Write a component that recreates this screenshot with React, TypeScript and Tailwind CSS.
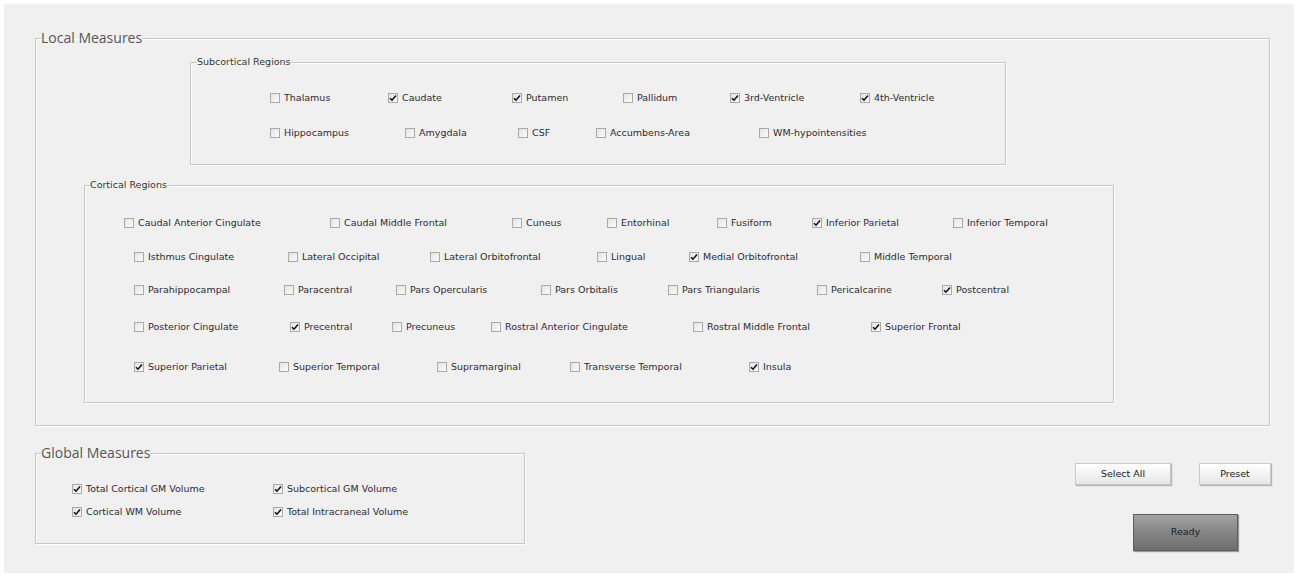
type Item = [string, boolean, string]

const subcortical: Item[][] = [
  [
    ['Thalamus', false, 'w-[118px]'],
    ['Caudate', true, 'w-[124px]'],
    ['Putamen', true, 'w-[111px]'],
    ['Pallidum', false, 'w-[107px]'],
    ['3rd-Ventricle', true, 'w-[130px]'],
    ['4th-Ventricle', true, ''],
  ],
  [
    ['Hippocampus', false, 'w-[135px]'],
    ['Amygdala', false, 'w-[113px]'],
    ['CSF', false, 'w-[78px]'],
    ['Accumbens-Area', false, 'w-[163px]'],
    ['WM-hypointensities', false, ''],
  ],
]

const cortical: { cls: string; items: Item[] }[] = [
  {
    cls: 'mt-[25px] pl-[39px]',
    items: [
      ['Caudal Anterior Cingulate', false, 'w-[206px]'],
      ['Caudal Middle Frontal', false, 'w-[182px]'],
      ['Cuneus', false, 'w-[95px]'],
      ['Entorhinal', false, 'w-[110px]'],
      ['Fusiform', false, 'w-[95px]'],
      ['Inferior Parietal', true, 'w-[141px]'],
      ['Inferior Temporal', false, ''],
    ],
  },
  {
    cls: 'mt-[20px] pl-[49px]',
    items: [
      ['Isthmus Cingulate', false, 'w-[154px]'],
      ['Lateral Occipital', false, 'w-[142px]'],
      ['Lateral Orbitofrontal', false, 'w-[167px]'],
      ['Lingual', false, 'w-[92px]'],
      ['Medial Orbitofrontal', true, 'w-[171px]'],
      ['Middle Temporal', false, ''],
    ],
  },
  {
    cls: 'mt-[19px] pl-[49px]',
    items: [
      ['Parahippocampal', false, 'w-[150px]'],
      ['Paracentral', false, 'w-[112px]'],
      ['Pars Opercularis', false, 'w-[145px]'],
      ['Pars Orbitalis', false, 'w-[127px]'],
      ['Pars Triangularis', false, 'w-[149px]'],
      ['Pericalcarine', false, 'w-[125px]'],
      ['Postcentral', true, ''],
    ],
  },
  {
    cls: 'mt-[23px] pl-[49px]',
    items: [
      ['Posterior Cingulate', false, 'w-[156px]'],
      ['Precentral', true, 'w-[102px]'],
      ['Precuneus', false, 'w-[99px]'],
      ['Rostral Anterior Cingulate', false, 'w-[202px]'],
      ['Rostral Middle Frontal', false, 'w-[178px]'],
      ['Superior Frontal', true, ''],
    ],
  },
  {
    cls: 'mt-[26px] pl-[49px]',
    items: [
      ['Superior Parietal', true, 'w-[145px]'],
      ['Superior Temporal', false, 'w-[158px]'],
      ['Supramarginal', false, 'w-[133px]'],
      ['Transverse Temporal', false, 'w-[179px]'],
      ['Insula', true, ''],
    ],
  },
]

const globalRows: Item[][] = [
  [
    ['Total Cortical GM Volume', true, 'w-[201px]'],
    ['Subcortical GM Volume', true, ''],
  ],
  [
    ['Cortical WM Volume', true, 'w-[201px]'],
    ['Total Intracraneal Volume', true, ''],
  ],
]

const font = "font-['DejaVu_Sans','Verdana',sans-serif]"
const etched = 'border border-[#c6c6c6] shadow-[inset_1px_1px_0_#ffffff,1px_1px_0_#ffffff]'

function Check({ label, checked, w }: { label: string; checked: boolean; w: string }) {
  return (
    <div className={`flex items-center h-[14px] shrink-0 ${w}`}>
      <span className="w-[10px] h-[10px] shrink-0 border border-[#a9a9a9] bg-gradient-to-br from-[#e4e4e4] to-[#fbfbfb] flex items-center justify-center">
        {checked && (
          <svg width="8" height="8" viewBox="0 0 8 8">
            <path d="M1 4.2 L3 6.2 L7 1.6" fill="none" stroke="#111" strokeWidth="1.6" />
          </svg>
        )}
      </span>
      <span className="ml-[4px] text-[9.5px] leading-[14px] text-[#2f2a33] whitespace-nowrap">{label}</span>
    </div>
  )
}

function Row({ items, cls }: { items: Item[]; cls: string }) {
  return (
    <div className={`flex ${cls}`}>
      {items.map(([l, c, w]) => (
        <Check key={l} label={l} checked={c} w={w} />
      ))}
    </div>
  )
}

export default function App() {
  return (
    <div className={`w-[1300px] h-[579px] bg-white pt-[4px] pl-[4px] overflow-hidden ${font}`}>
      <div className="w-[1290px] h-[569px] bg-[#f0f0f0] flex flex-col">
        {/* Local measures */}
        <fieldset className={`ml-[31px] mt-[25px] w-[1235px] h-[397px] ${etched}`}>
          <legend className="ml-[5px] text-[14px] leading-[18px] text-[#555] font-['Open_Sans',sans-serif]">
            Local Measures
          </legend>
          <fieldset className={`ml-[154px] mt-[9px] w-[816px] h-[109px] ${etched}`}>
            <legend className="ml-[6px] text-[9.5px] leading-[12px] text-[#333]">Subcortical Regions</legend>
            <div className="pl-[79px]">
              <Row items={subcortical[0]} cls="mt-[23px]" />
              <Row items={subcortical[1]} cls="mt-[21px]" />
            </div>
          </fieldset>
          <fieldset className={`ml-[48px] mt-[14px] w-[1030px] h-[224px] ${etched}`}>
            <legend className="ml-[5px] text-[9.5px] leading-[12px] text-[#333]">Cortical Regions</legend>
            {cortical.map((r, i) => (
              <Row key={i} items={r.items} cls={r.cls} />
            ))}
          </fieldset>
        </fieldset>

        {/* Global measures + buttons */}
        <div className="flex items-start mt-[18px] ml-[31px]">
          <fieldset className={`w-[490px] h-[100px] shrink-0 ${etched}`}>
            <legend className="ml-[5px] text-[14px] leading-[18px] text-[#555] font-['Open_Sans',sans-serif]">
              Global Measures
            </legend>
            <div className="pl-[36px]">
              <Row items={globalRows[0]} cls="mt-[20px]" />
              <Row items={globalRows[1]} cls="mt-[9px]" />
            </div>
          </fieldset>
          <div className="ml-[550px] mt-[19px] flex flex-col">
            <div className="flex gap-[28px]">
              <button className="w-[96px] h-[22px] border border-[#c9c9c9] bg-gradient-to-b from-[#ffffff] to-[#e6e6e6] shadow-[1px_1px_1px_#b5b5b5] text-[9.5px] text-[#222]">
                Select All
              </button>
              <button className="w-[72px] h-[22px] border border-[#c9c9c9] bg-gradient-to-b from-[#ffffff] to-[#e6e6e6] shadow-[1px_1px_1px_#b5b5b5] text-[9.5px] text-[#222]">
                Preset
              </button>
            </div>
            <button className="ml-[58px] mt-[29px] w-[105px] h-[37px] border border-[#5c5c5c] bg-gradient-to-b from-[#a3a3a3] via-[#858585] to-[#6e6e6e] shadow-[1px_1px_1px_#999] text-[9.5px] text-[#222]">
              Ready
            </button>
          </div>
        </div>
      </div>
    </div>
  )
}
